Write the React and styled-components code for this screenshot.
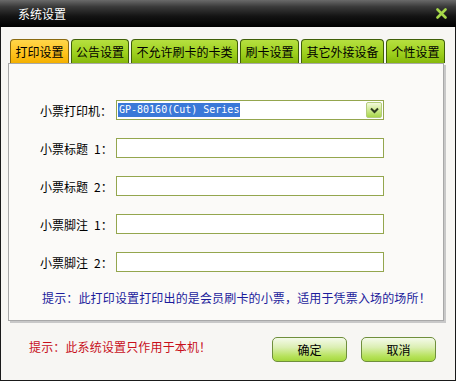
import styled, { createGlobalStyle } from 'styled-components';

const GlobalStyle = createGlobalStyle`
	html, body {
		margin: 0;
		padding: 0;
		background: #f7f6f3;
	}
	body {
		font-family: "Noto Sans CJK SC", "DejaVu Sans", sans-serif;
		font-size: 12px;
		color: #000;
	}
`;

const Window = styled.div`
	width: 456px;
	height: 381px;
	box-sizing: border-box;
	display: flex;
	flex-direction: column;
	background: #f7f6f3;
	border: 1px solid #1a1a1a;
	border-top: none;
`;

const TitleBar = styled.div`
	height: 27px;
	margin: 0 -1px;
	display: flex;
	align-items: center;
	justify-content: space-between;
	padding: 0 9px 0 18px;
	background: linear-gradient(180deg, #6a6a6a 0%, #3a3a3a 25%, #141414 60%, #000 100%);
	color: #fff;
	font-size: 12px;
`;

const Close = styled.div`
	display: flex;
	align-items: center;
	cursor: pointer;
`;

const Body = styled.div`
	flex: 1;
	display: flex;
	flex-direction: column;
	padding: 12px 0 0 7px;
`;

const Tabs = styled.div`
	display: flex;
	gap: 2px;
	padding-left: 2px;
	height: 24px;
`;

const Tab = styled.div`
	box-sizing: border-box;
	height: 24px;
	padding: 0 3px;
	display: flex;
	align-items: center;
	justify-content: center;
	border: 1px solid ${(p) => (p.$active ? '#8a6a10' : '#3f5f08')};
	border-bottom: none;
	border-radius: 4px 4px 0 0;
	background: ${(p) =>
		p.$active
			? 'linear-gradient(180deg, #ffd64a 0%, #ffc21c 60%, #f4b000 100%)'
			: 'linear-gradient(180deg, #b6e040 0%, #9ccf1c 60%, #86b80c 100%)'};
	font-size: 12px;
	white-space: nowrap;
`;

const Panel = styled.div`
	width: 436px;
	height: 258px;
	box-sizing: border-box;
	background: #fbfaf8;
	border: 1px solid #a8a8a8;
	box-shadow: 2px 2px 0 #c8c8c8;
	padding: 36px 0 0 31px;
	display: flex;
	flex-direction: column;
	gap: 18px;
`;

const Row = styled.div`
	display: flex;
	align-items: center;
	height: 20px;
`;

const Label = styled.div`
	width: 76px;
	font-size: 12px;
	white-space: pre;
`;

const Field = styled.div`
	width: 268px;
	height: 20px;
	box-sizing: border-box;
	border: 1px solid #94a64e;
	background: #fff;
	display: flex;
	align-items: center;
	padding: 0 1px;
`;

const Selected = styled.span`
	background: #3a78d8;
	color: #fff;
	font-family: "DejaVu Sans Mono", "Liberation Mono", monospace;
	font-size: 10px;
	line-height: 14px;
	padding: 0 1px;
`;

const DropButton = styled.div`
	margin-left: auto;
	width: 16px;
	height: 16px;
	box-sizing: border-box;
	border: 1px solid #b4cc7c;
	border-radius: 2px;
	background: linear-gradient(180deg, #f2f9dc 0%, #cbe88a 55%, #a8d64a 100%);
	display: flex;
	align-items: center;
	justify-content: center;
`;

const Hint = styled.div`
	padding-left: 2px;
	color: ${(p) => p.$color};
	font-size: 12px;
	line-height: 16px;
	letter-spacing: 0.15px;
	white-space: nowrap;
`;

const Footer = styled.div`
	display: flex;
	align-items: center;
	margin-top: 16px;
	padding: 0 19px;
`;

const FooterHint = styled(Hint)`
	flex: 1;
	padding-bottom: 5px;
`;

const Buttons = styled.div`
	display: flex;
	gap: 14px;
`;

const Button = styled.button`
	width: 75px;
	height: 25px;
	box-sizing: border-box;
	border: 1px solid #6f8f3c;
	border-radius: 5px;
	background: linear-gradient(180deg, #f4faea 0%, #dcefb4 40%, #b6e25a 80%, #a6d83e 100%);
	font-family: "Noto Sans CJK SC", sans-serif;
	font-size: 12px;
	color: #000;
	padding: 0;
	cursor: pointer;
`;

const tabs = ['打印设置', '公告设置', '不允许刷卡的卡类', '刷卡设置', '其它外接设备', '个性设置'];
const tabWidths = [59, 58, 107, 59, 83, 59];
const fields = ['小票标题\u20021：', '小票标题\u20022：', '小票脚注\u20021：', '小票脚注\u20022：'];

export default function App() {
	return (
		<>
			<GlobalStyle />
			<Window>
				<TitleBar>
					<span>系统设置</span>
					<Close>
						<svg width="11" height="11" viewBox="0 0 11 11">
							<path d="M1.5 1.5 L9.5 9.5 M9.5 1.5 L1.5 9.5" stroke="#a6d84a" strokeWidth="2.6" strokeLinecap="round" />
						</svg>
					</Close>
				</TitleBar>
				<Body>
					<Tabs>
						{tabs.map((t, i) => (
							<Tab key={t} $active={i === 0} style={{ width: tabWidths[i] }}>
								{t}
							</Tab>
						))}
					</Tabs>
					<Panel>
						<Row>
							<Label>小票打印机：</Label>
							<Field>
								<Selected>GP-80160(Cut) Series</Selected>
								<DropButton>
									<svg width="9" height="7" viewBox="0 0 9 7">
										<path d="M1 1.5 L4.5 5 L8 1.5" fill="none" stroke="#2e3a20" strokeWidth="2" />
									</svg>
								</DropButton>
							</Field>
						</Row>
						{fields.map((f) => (
							<Row key={f}>
								<Label>{f}</Label>
								<Field />
							</Row>
						))}
						<Hint $color="#1c1c9c">提示：此打印设置打印出的是会员刷卡的小票，适用于凭票入场的场所！</Hint>
					</Panel>
					<Footer>
						<FooterHint $color="#c8101c">提示：此系统设置只作用于本机！</FooterHint>
						<Buttons>
							<Button>确定</Button>
							<Button>取消</Button>
						</Buttons>
					</Footer>
				</Body>
			</Window>
		</>
	);
}
